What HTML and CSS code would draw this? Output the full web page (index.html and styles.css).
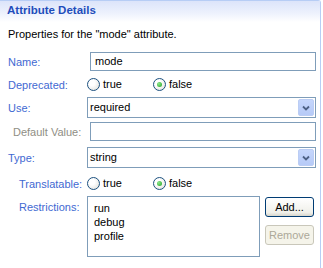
FILE: index.html
```html
<!DOCTYPE html>
<html>
<head>
  <title>Attribute Details</title>
  <link rel="stylesheet" href="styles.css">
</head>
<body>
  <div class="section">
    <div class="section-head">Attribute Details</div>
    <p class="desc">Properties for the "mode" attribute.</p>

    <div class="row row-name">
      <label class="lbl">Name:</label>
      <div class="text-field">mode</div>
    </div>

    <div class="row row-radio">
      <label class="lbl">Deprecated:</label>
      <div class="radios">
        <span class="opt"><span class="radio"></span>true</span>
        <span class="opt"><span class="radio on"></span>false</span>
      </div>
    </div>

    <div class="row row-select">
      <label class="lbl">Use:</label>
      <div class="combo">
        <span class="combo-val">required</span>
        <span class="combo-btn">
          <svg width="8" height="6" viewBox="0 0 8 6"><path d="M1 1.5 L4 4.5 L7 1.5" fill="none" stroke="#4d6185" stroke-width="1.8"/></svg>
        </span>
      </div>
    </div>

    <div class="row row-default">
      <label class="lbl lbl-off">Default Value:</label>
      <div class="text-field"></div>
    </div>

    <div class="row row-select">
      <label class="lbl">Type:</label>
      <div class="combo">
        <span class="combo-val">string</span>
        <span class="combo-btn">
          <svg width="8" height="6" viewBox="0 0 8 6"><path d="M1 1.5 L4 4.5 L7 1.5" fill="none" stroke="#4d6185" stroke-width="1.8"/></svg>
        </span>
      </div>
    </div>

    <div class="row row-radio row-trans">
      <label class="lbl lbl-sub">Translatable:</label>
      <div class="radios">
        <span class="opt"><span class="radio"></span>true</span>
        <span class="opt"><span class="radio on"></span>false</span>
      </div>
    </div>

    <div class="row row-list">
      <label class="lbl lbl-sub lbl-top">Restrictions:</label>
      <div class="listbox">
        <div>run</div>
        <div>debug</div>
        <div>profile</div>
      </div>
      <div class="buttons">
        <button class="btn">Add...</button>
        <button class="btn" disabled>Remove</button>
      </div>
    </div>
  </div>
</body>
</html>
```

FILE: styles.css
```css
body { margin: 0; background: #fff; font-family: "Liberation Sans", Arial, sans-serif; font-size: 11px; color: #000; }

.section { width: 321px; height: 268px; border-top: 1px solid #b7cdf5; border-right: 1px solid #b7cdf5; border-top-right-radius: 3px; box-sizing: border-box; }
.section-head { height: 21px; padding: 3px 0 0 7px; box-sizing: border-box; font-weight: bold; font-size: 11.5px; color: #1f4dbb; background: linear-gradient(#dce4fa, #eef2fd 60%, #fff); }
.desc { margin: 6px 0 0 8px; line-height: 13px; }

.row { display: flex; align-items: center; }
.lbl { width: 79px; padding-left: 8px; color: #3f69d2; }
.lbl-off { color: #8f8e84; padding-left: 13px; width: 74px; }
.lbl-sub { padding-left: 19px; width: 68px; }
.lbl-top { padding-top: 5px; }

.row-name { margin-top: 11px; height: 19px; }
.row-radio { margin-top: 7px; height: 13px; }
.row-select { margin-top: 6px; height: 21px; }
.row-default { margin-top: 4px; height: 19px; }
.row-trans { margin-top: 9px; }
.row-list { margin-top: 6px; align-items: flex-start; }

.text-field { margin-left: 3px; width: 226px; height: 19px; border: 1px solid #7f9db9; box-sizing: border-box; padding: 2px 0 0 4px; line-height: 13px; }

.combo { width: 229px; height: 21px; border: 1px solid #7f9db9; box-sizing: border-box; display: flex; align-items: center; justify-content: space-between; padding: 1px 1px 1px 2px; }
.combo-val { line-height: 13px; }
.combo-btn { width: 16px; height: 17px; display: flex; align-items: center; justify-content: center; background: linear-gradient(#c5d6fc, #b6caf7); border: 1px solid #bbcdf4; border-radius: 2px; box-sizing: border-box; }

.radios { display: flex; }
.opt { display: flex; align-items: center; width: 66px; line-height: 13px; }
.radio { width: 13px; height: 13px; margin-right: 3px; border: 1px solid #1c5180; border-radius: 50%; box-sizing: border-box; background: radial-gradient(circle at 35% 35%, #fff 30%, #dcdcd6); position: relative; }
.radio.on::after { content: ""; position: absolute; left: 3px; top: 3px; width: 5px; height: 5px; border-radius: 50%; background: radial-gradient(circle at 35% 35%, #8ce88c, #21a121); }

.listbox { width: 173px; height: 61px; border: 1px solid #7f9db9; box-sizing: border-box; padding: 4px 0 0 6px; line-height: 14px; }
.buttons { display: flex; flex-direction: column; gap: 8px; margin: 1px 0 0 5px; }
.btn { width: 49px; height: 20px; padding: 0; font: inherit; color: #000; border: 1px solid #003c74; border-radius: 3px; background: linear-gradient(#fff, #f0f0ea 80%, #d8d6cc); }
.btn:disabled { color: #aca899; border-color: #c9c7ba; background: #f5f4ea; }
```
